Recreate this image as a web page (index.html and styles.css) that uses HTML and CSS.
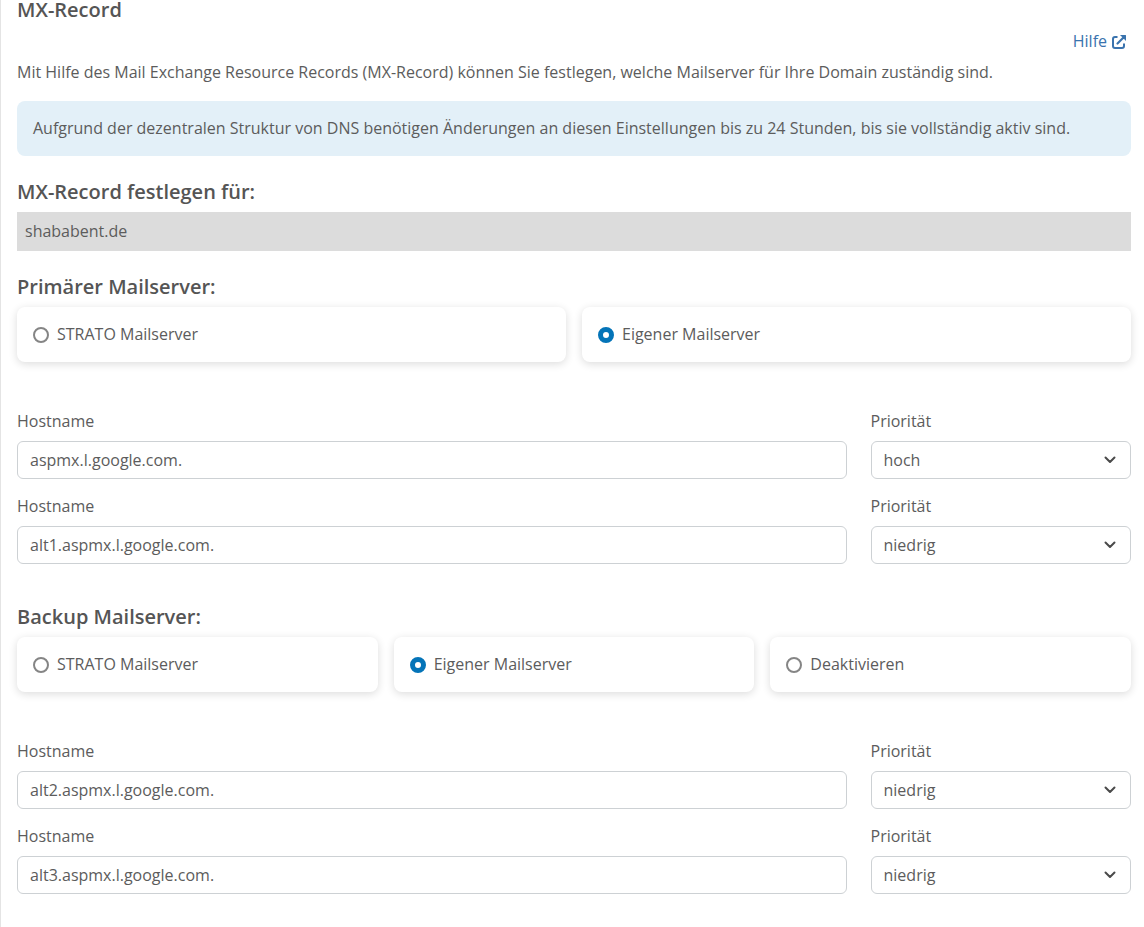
FILE: index.html
```html
<!DOCTYPE html>
<html lang="de">
<head>
<meta charset="utf-8">
<meta name="viewport" content="width=device-width, initial-scale=1">
<title>MX-Record</title>
<link rel="stylesheet" href="styles.css">
</head>
<body>
<main class="page">
  <h1 class="title">MX-Record</h1>
  <div class="help">
    <a class="help-link" href="#hilfe">Hilfe
      <svg class="help-icon" viewBox="0 0 14 14" aria-hidden="true">
        <path d="M5.500 2H3a2 2 0 0 0-2 2v7a2 2 0 0 0 2 2h7a2 2 0 0 0 2-2V8.500" fill="none" stroke="currentColor" stroke-width="2"/>
        <path d="M5.500 8.500 11.500 2.500" fill="none" stroke="currentColor" stroke-width="2.200" stroke-linecap="round"/>
        <path d="M8.200 0H13.500a.5.5 0 0 1 .5.5v5.300z" fill="currentColor" stroke="currentColor" stroke-width=".3"/>
      </svg>
    </a>
  </div>
  <p class="intro">Mit Hilfe des Mail Exchange Resource Records (MX-Record) können Sie festlegen, welche Mailserver für Ihre Domain zuständig sind.</p>
  <div class="notice">Aufgrund der dezentralen Struktur von DNS benötigen Änderungen an diesen Einstellungen bis zu 24 Stunden, bis sie vollständig aktiv sind.</div>

  <section class="section">
    <h2 class="heading">MX-Record festlegen für:</h2>
    <div class="domain">shababent.de</div>
  </section>

  <section class="section">
    <h2 class="heading">Primärer Mailserver:</h2>
    <div class="options">
      <label class="option"><input class="radio" type="radio" name="primary">STRATO Mailserver</label>
      <label class="option"><input class="radio" type="radio" name="primary" checked>Eigener Mailserver</label>
    </div>
    <div class="servers">
      <div class="server">
        <div class="field host">
          <label for="host1">Hostname</label>
          <input class="control" id="host1" type="text" value="aspmx.l.google.com.">
        </div>
        <div class="field priority">
          <label for="prio1">Priorität</label>
          <div class="select">
            <select class="control" id="prio1"><option selected>hoch</option><option>niedrig</option></select>
            <svg class="chevron" viewBox="0 0 12 12" aria-hidden="true"><path d="M1.500 3.500 6 8l4.500-4.500"/></svg>
          </div>
        </div>
      </div>
      <div class="server">
        <div class="field host">
          <label for="host2">Hostname</label>
          <input class="control" id="host2" type="text" value="alt1.aspmx.l.google.com.">
        </div>
        <div class="field priority">
          <label for="prio2">Priorität</label>
          <div class="select">
            <select class="control" id="prio2"><option>hoch</option><option selected>niedrig</option></select>
            <svg class="chevron" viewBox="0 0 12 12" aria-hidden="true"><path d="M1.500 3.500 6 8l4.500-4.500"/></svg>
          </div>
        </div>
      </div>
    </div>
  </section>

  <section class="section section-backup">
    <h2 class="heading">Backup Mailserver:</h2>
    <div class="options">
      <label class="option"><input class="radio" type="radio" name="backup">STRATO Mailserver</label>
      <label class="option"><input class="radio" type="radio" name="backup" checked>Eigener Mailserver</label>
      <label class="option"><input class="radio" type="radio" name="backup">Deaktivieren</label>
    </div>
    <div class="servers">
      <div class="server">
        <div class="field host">
          <label for="host3">Hostname</label>
          <input class="control" id="host3" type="text" value="alt2.aspmx.l.google.com.">
        </div>
        <div class="field priority">
          <label for="prio3">Priorität</label>
          <div class="select">
            <select class="control" id="prio3"><option>hoch</option><option selected>niedrig</option></select>
            <svg class="chevron" viewBox="0 0 12 12" aria-hidden="true"><path d="M1.500 3.500 6 8l4.500-4.500"/></svg>
          </div>
        </div>
      </div>
      <div class="server">
        <div class="field host">
          <label for="host4">Hostname</label>
          <input class="control" id="host4" type="text" value="alt3.aspmx.l.google.com.">
        </div>
        <div class="field priority">
          <label for="prio4">Priorität</label>
          <div class="select">
            <select class="control" id="prio4"><option>hoch</option><option selected>niedrig</option></select>
            <svg class="chevron" viewBox="0 0 12 12" aria-hidden="true"><path d="M1.500 3.500 6 8l4.500-4.500"/></svg>
          </div>
        </div>
      </div>
    </div>
  </section>
</main>
</body>
</html>
```
FILE: styles.css
```css
* {
  box-sizing: border-box;
}

body {
  margin: 0;
  background: #fff;
  color: #5c5c5c;
  font: 400 16px/23px "Open Sans", "Noto Sans", sans-serif;
}

.page {
  min-height: 100vh;
  padding: 0 13px 32px 16px;
  border-left: 1px solid #e4e4e4;
}

.title,
.heading {
  margin: 0;
  color: #555;
  font-size: 20px;
  font-weight: 600;
}

.title {
  line-height: 20px;
}

.heading {
  margin-bottom: 8px;
  line-height: 24px;
}

.help {
  display: flex;
  justify-content: flex-end;
  padding: 10px 5px 0 0;
}

.help-link {
  display: flex;
  align-items: center;
  gap: 5px;
  color: #3a73ae;
  text-decoration: none;
}

.help-icon {
  width: 14px;
  height: 14px;
}

.intro {
  margin: 8px 0 17px;
}

.notice {
  padding: 16px;
  border-radius: 8px;
  background: #e3f0f8;
}

.section {
  margin-top: 24px;
}

.section-backup {
  margin-top: 41px;
}

.domain {
  padding: 8px;
  background: #dcdcdc;
}

.options {
  display: grid;
  grid-auto-flow: column;
  grid-auto-columns: 1fr;
  gap: 16px;
}

.option {
  display: flex;
  align-items: center;
  gap: 8px;
  padding: 16px;
  border-radius: 8px;
  background: #fff;
  box-shadow: 0 2px 8px rgba(0, 0, 0, 0.14);
}

.radio {
  appearance: none;
  width: 16px;
  height: 16px;
  margin: 0;
  border: 2px solid #858585;
  border-radius: 50%;
  background: #fff;
}

.radio:checked {
  border: 5px solid #0474b8;
}

.servers {
  display: grid;
  gap: 16px;
  margin-top: 48px;
}

.server {
  display: grid;
  grid-template-columns: repeat(12, 1fr);
  gap: 24px;
}

.field {
  display: grid;
  gap: 8px;
}

.host {
  grid-column: span 9;
}

.priority {
  grid-column: span 3;
}

.control {
  appearance: none;
  width: 100%;
  height: 38px;
  padding: 0 12px;
  border: 1px solid #cdd1d4;
  border-radius: 6px;
  background: #fff;
  color: inherit;
  font: inherit;
}

.select {
  position: relative;
}

.chevron {
  position: absolute;
  top: 13px;
  right: 15px;
  width: 12px;
  height: 12px;
  fill: none;
  stroke: #4a4a4a;
  stroke-width: 2;
  stroke-linecap: round;
  stroke-linejoin: round;
  pointer-events: none;
}
```
